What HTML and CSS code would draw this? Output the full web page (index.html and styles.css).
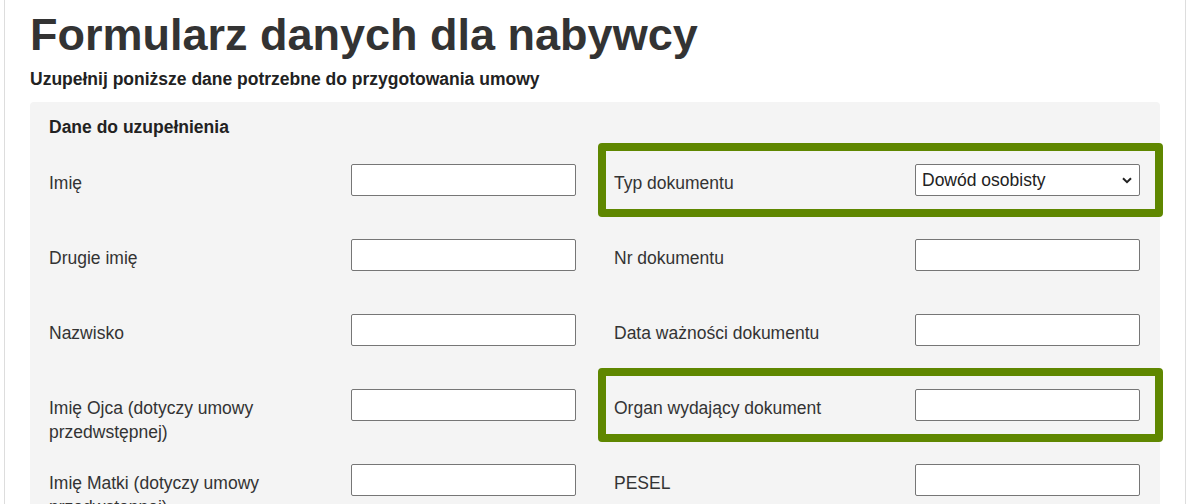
FILE: index.html
```html
<!DOCTYPE html>
<html lang="pl">
<head>
<meta charset="utf-8">
<title>Formularz danych dla nabywcy</title>
<link rel="stylesheet" href="styles.css">
</head>
<body>
<div class="page">
  <h1 class="title">Formularz danych dla nabywcy</h1>
  <p class="subtitle">Uzupełnij poniższe dane potrzebne do przygotowania umowy</p>
  <section class="panel">
    <h2 class="panel-title">Dane do uzupełnienia</h2>
    <div class="grid">
      <div class="field"><label class="label">Imię</label><input class="input" type="text"></div>
      <div class="field highlight"><label class="label">Typ dokumentu</label>
        <span class="select-wrap">
          <select class="input select"><option>Dowód osobisty</option><option>Paszport</option></select>
          <svg class="chevron" width="10" height="7" viewBox="0 0 10 7" aria-hidden="true"><path d="M1 1.2 L5 5.2 L9 1.2" fill="none" stroke="#222" stroke-width="2"/></svg>
        </span></div>
      <div class="field"><label class="label">Drugie imię</label><input class="input" type="text"></div>
      <div class="field"><label class="label">Nr dokumentu</label><input class="input" type="text"></div>
      <div class="field"><label class="label">Nazwisko</label><input class="input" type="text"></div>
      <div class="field"><label class="label">Data ważności dokumentu</label><input class="input" type="text"></div>
      <div class="field"><label class="label">Imię Ojca (dotyczy umowy przedwstępnej)</label><input class="input" type="text"></div>
      <div class="field highlight"><label class="label">Organ wydający dokument</label><input class="input" type="text"></div>
      <div class="field"><label class="label">Imię Matki (dotyczy umowy przedwstępnej)</label><input class="input" type="text"></div>
      <div class="field"><label class="label">PESEL</label><input class="input" type="text"></div>
    </div>
  </section>
</div>
</body>
</html>
```
FILE: styles.css
```css
html, body {
  margin: 0;
  padding: 0;
  background: #ffffff;
  overflow: hidden;
}
body {
  font-family: "Liberation Sans", Arial, sans-serif;
  color: #333333;
}
.page {
  margin: 0 3px 0 4px;
  border-left: 1px solid #dddddd;
  border-right: 1px solid #dddddd;
  padding: 8px 25px 0 25px;
  min-height: 504px;
  box-sizing: border-box;
}
.title {
  margin: 0;
  font-size: 45px;
  line-height: 54px;
  font-weight: bold;
  color: #333333;
}
.subtitle {
  margin: 5px 0 11px 0;
  font-size: 17.5px;
  line-height: 24px;
  font-weight: bold;
  color: #222222;
}
.panel {
  background: #f4f4f4;
  border-radius: 4px;
  padding: 13px 19px 0 19px;
}
.panel-title {
  margin: 0 0 25px 0;
  font-size: 17.5px;
  line-height: 24px;
  font-weight: bold;
  color: #222222;
}
.grid {
  display: grid;
  grid-template-columns: 527px 526px;
  column-gap: 38px;
}
.field {
  position: relative;
  display: flex;
  align-items: flex-start;
  justify-content: space-between;
  min-height: 75px;
}
.label {
  padding-top: 7px;
  width: 290px;
  font-size: 17.5px;
  line-height: 24px;
  color: #333333;
}
.input {
  box-sizing: border-box;
  width: 225px;
  height: 32px;
  margin: 0;
  border: 1px solid #767676;
  border-radius: 2px;
  background: #ffffff;
  font-family: "Liberation Sans", Arial, sans-serif;
  font-size: 17.5px;
  color: #222222;
  padding: 0 6px;
}
.select-wrap {
  position: relative;
  display: block;
  width: 225px;
  height: 32px;
}
.select {
  display: block;
  -webkit-appearance: none;
  appearance: none;
  padding: 0 24px 0 6px;
  color: #222222;
}
.chevron {
  position: absolute;
  right: 8px;
  top: 13px;
  pointer-events: none;
}
.highlight::after {
  content: "";
  position: absolute;
  top: -21px;
  left: -16px;
  right: -23px;
  bottom: 22px;
  border: 8px solid #5f8700;
  border-radius: 4px;
  pointer-events: none;
}
```
